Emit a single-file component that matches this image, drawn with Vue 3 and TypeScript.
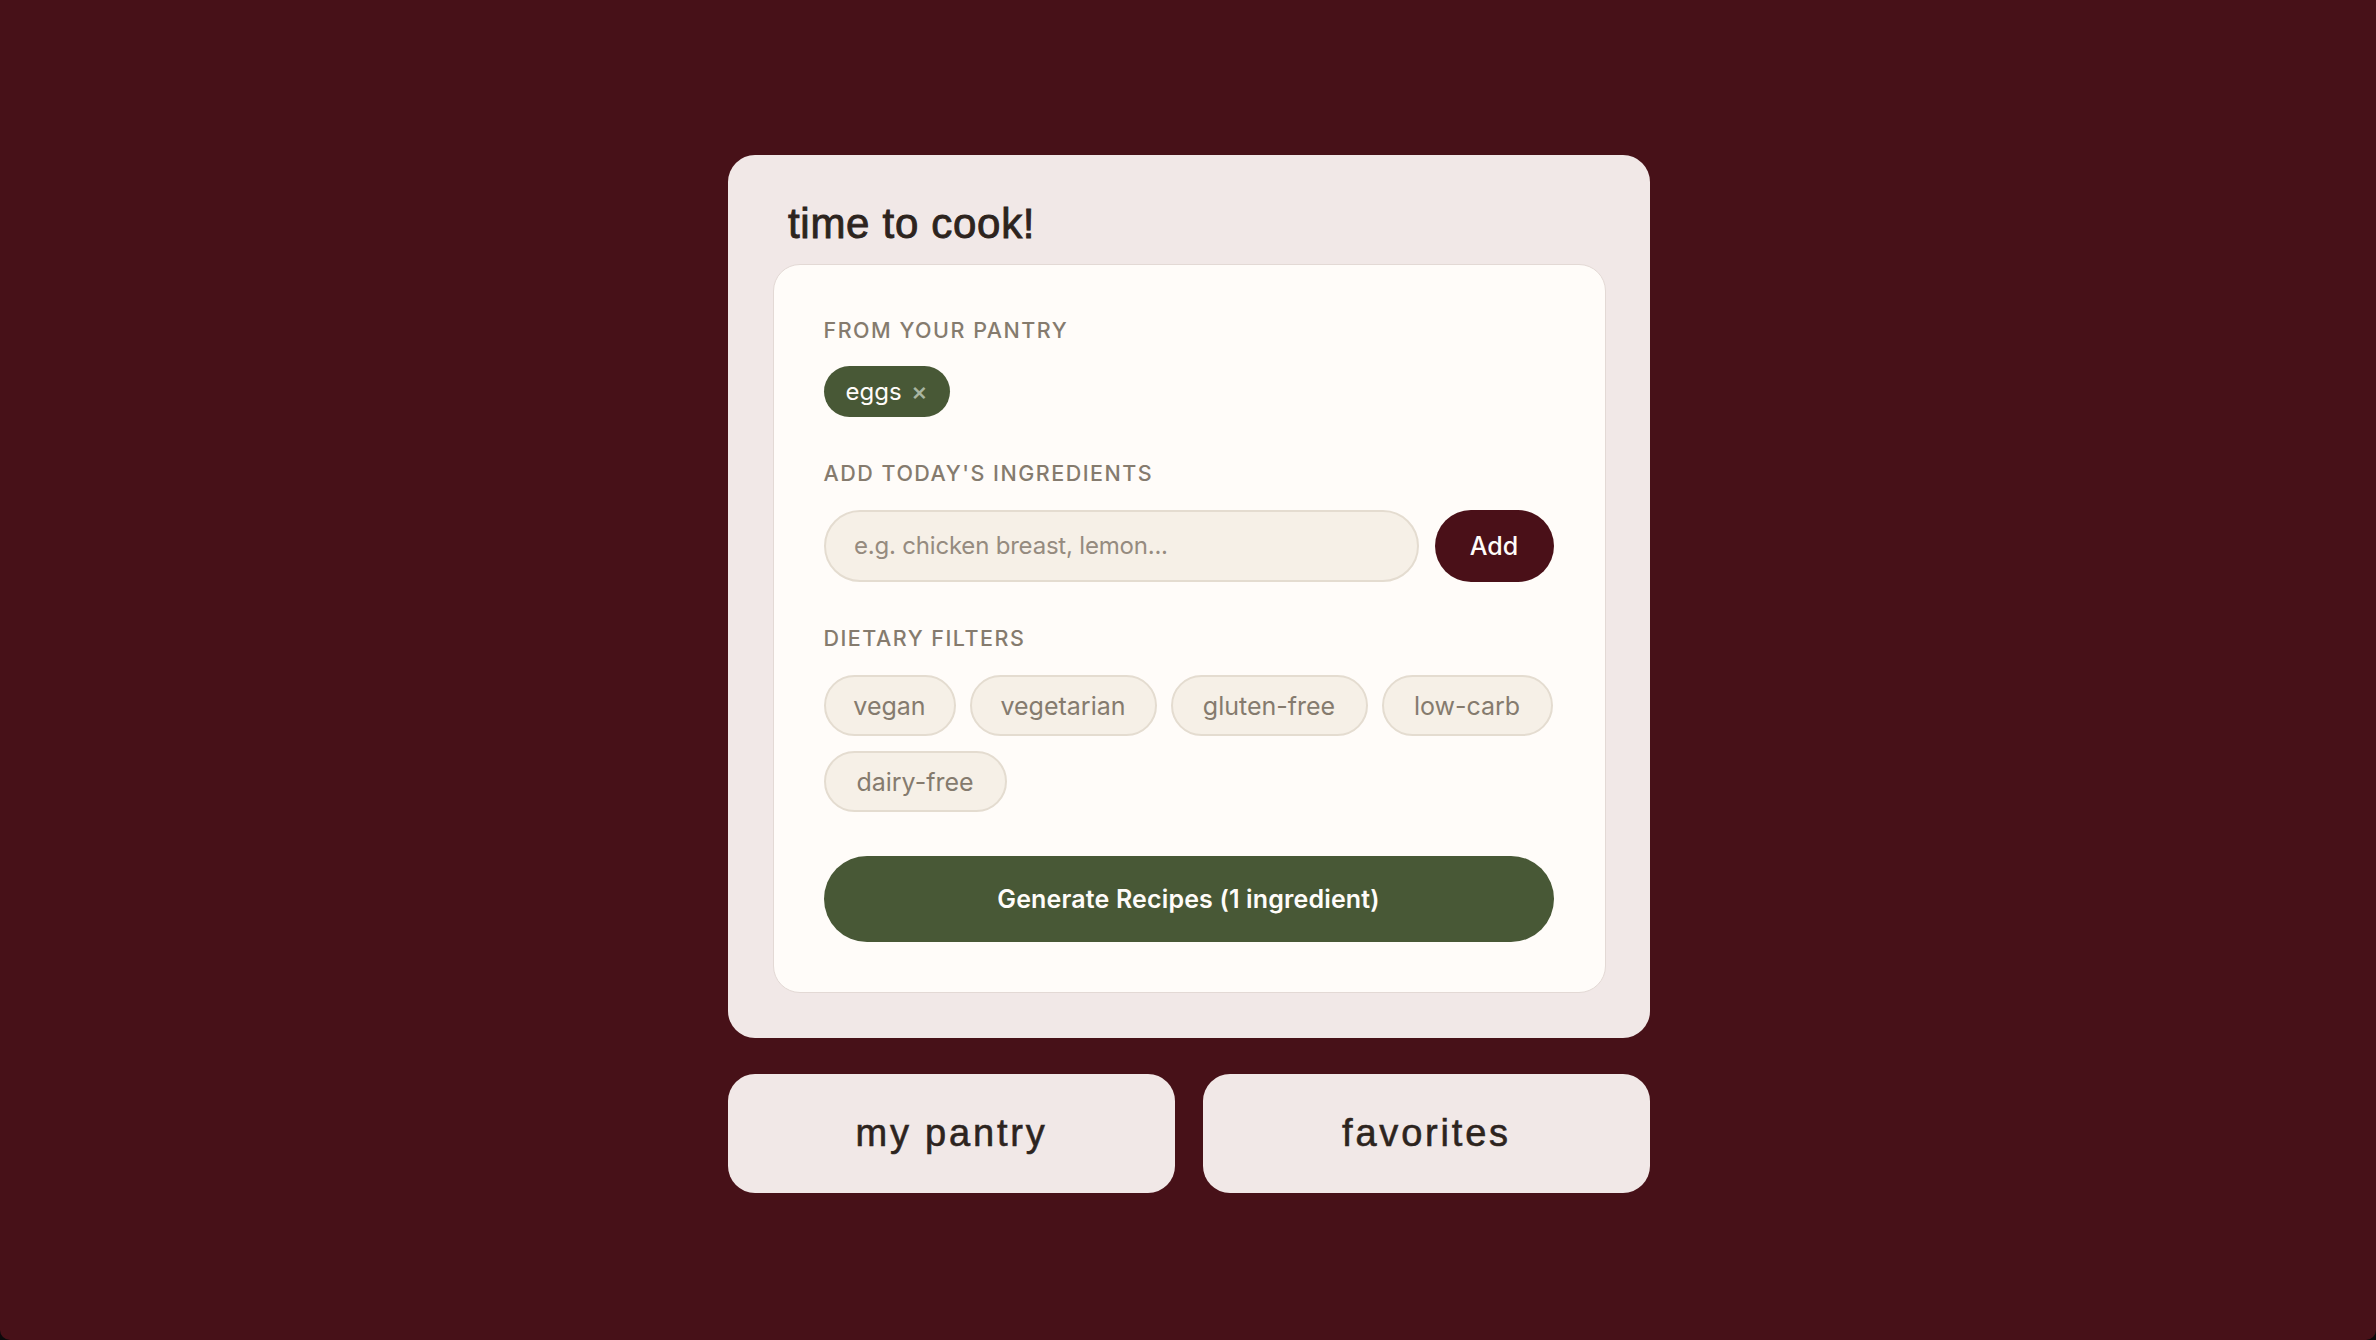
<script setup lang="ts">
import { ref } from 'vue'

interface Filter {
  name: string
  width: number
}

const pantry = ref<string[]>(['eggs'])
const ingredient = ref('')
const filters: Filter[] = [
  { name: 'vegan', width: 132 },
  { name: 'vegetarian', width: 187 },
  { name: 'gluten-free', width: 197 },
  { name: 'low-carb', width: 171 },
  { name: 'dairy-free', width: 183 },
]
</script>

<template>
  <main class="page">
    <div class="column">
      <section class="card">
        <h1 class="title">time to cook!</h1>
        <div class="panel">
          <h2 class="label first">FROM YOUR PANTRY</h2>
          <div class="pantry">
            <span v-for="item in pantry" :key="item" class="tag">
              {{ item }}<span class="tag-x">×</span>
            </span>
          </div>
          <h2 class="label second">ADD TODAY'S INGREDIENTS</h2>
          <div class="add-row">
            <input v-model="ingredient" class="input" type="text" placeholder="e.g. chicken breast, lemon..." />
            <button class="add" type="button">Add</button>
          </div>
          <h2 class="label third">DIETARY FILTERS</h2>
          <div class="filters">
            <button
              v-for="f in filters"
              :key="f.name"
              class="filter"
              type="button"
              :style="{ width: f.width + 'px' }"
            >{{ f.name }}</button>
          </div>
          <button class="generate" type="button">Generate Recipes (1 ingredient)</button>
        </div>
      </section>
      <nav class="links">
        <button class="link" type="button">my pantry</button>
        <button class="link" type="button">favorites</button>
      </nav>
    </div>
  </main>
</template>

<style scoped>
.page {
  position: relative;
  height: 1340px;
  box-sizing: border-box;
  padding: 155px 0 0 2px;
  background: #471118;
  font-family: Inter, "Noto Sans", sans-serif;
  overflow: hidden;
}
.page::after {
  content: "";
  position: absolute;
  inset: 0;
  border-radius: 0 0 10px 10px;
  box-shadow: 0 0 0 12px #0c0a0b;
  pointer-events: none;
}
.column {
  width: 922px;
  margin: 0 auto;
}
.card {
  box-sizing: border-box;
  height: 883px;
  padding: 0 44.5px 45px;
  background: #f1e8e7;
  border-radius: 27px;
}
.title {
  margin: 0;
  height: 109px;
  box-sizing: border-box;
  padding: 45px 0 0 15.5px;
  font-family: "Liberation Sans", sans-serif;
  font-size: 42px;
  line-height: 48px;
  font-weight: 400;
  letter-spacing: 0.7px;
  -webkit-text-stroke: 0.9px #2d241e;
  color: #2d241e;
}
.panel {
  box-sizing: border-box;
  height: 729px;
  padding: 51px 51px 0 50px;
  background: #fffcf9;
  border: 1.5px solid #e3d9d5;
  border-radius: 27px;
}
.label {
  margin: 0;
  font-size: 21.5px;
  line-height: 28px;
  font-weight: 500;
  letter-spacing: 1.5px;
  color: #857b6e;
}
.pantry {
  display: flex;
  margin-top: 21.5px;
}
.tag {
  display: inline-flex;
  align-items: center;
  box-sizing: border-box;
  height: 51px;
  width: 126px;
  padding-left: 22px;
  border-radius: 26px;
  background: #485836;
  color: #fffcf9;
  font-size: 24px;
}
.tag-x {
  margin-left: 9.5px;
  font-size: 25px;
  line-height: 1;
  font-weight: 500;
  color: #a9b5a0;
}
.second {
  margin-top: 42.5px;
}
.add-row {
  display: flex;
  gap: 16px;
  margin-top: 22.5px;
}
.input {
  flex: 1;
  min-width: 0;
  box-sizing: border-box;
  height: 72px;
  padding: 0 28.5px;
  border: 2.5px solid #e4dcd0;
  border-radius: 36px;
  background: #f6f0e7;
  font: inherit;
  font-size: 24px;
  letter-spacing: -0.2px;
  color: #2d241e;
  outline: none;
}
.input::placeholder {
  color: #958b7f;
  opacity: 1;
}
.add {
  width: 119px;
  height: 72px;
  border: 0;
  border-radius: 36px;
  background: #4a1018;
  color: #fffcf9;
  font: inherit;
  font-size: 25px;
  font-weight: 500;
}
.third {
  margin-top: 42.5px;
}
.filters {
  display: flex;
  flex-wrap: wrap;
  gap: 15px 14px;
  margin-top: 23px;
}
.filter {
  box-sizing: border-box;
  height: 61px;
  padding: 0;
  border: 2.5px solid #e4dcd0;
  border-radius: 31px;
  background: #f6f0e7;
  color: #857b6e;
  font: inherit;
  font-size: 25px;
}
.generate {
  display: block;
  width: 100%;
  height: 86px;
  margin-top: 44px;
  border: 0;
  border-radius: 43px;
  background: #485836;
  color: #fffcf9;
  font: inherit;
  font-size: 25px;
  font-weight: 600;
  letter-spacing: 0.15px;
}
.links {
  display: grid;
  grid-template-columns: 1fr 1fr;
  gap: 28px;
  margin-top: 36px;
}
.link {
  height: 119px;
  border: 0;
  border-radius: 27px;
  background: #f1e8e7;
  color: #2d241e;
  font-family: "Liberation Sans", sans-serif;
  font-size: 38px;
  letter-spacing: 2.8px;
  -webkit-text-stroke: 0.6px #2d241e;
}
</style>

<style>
html, body { margin: 0; background: #471118; }
</style>
